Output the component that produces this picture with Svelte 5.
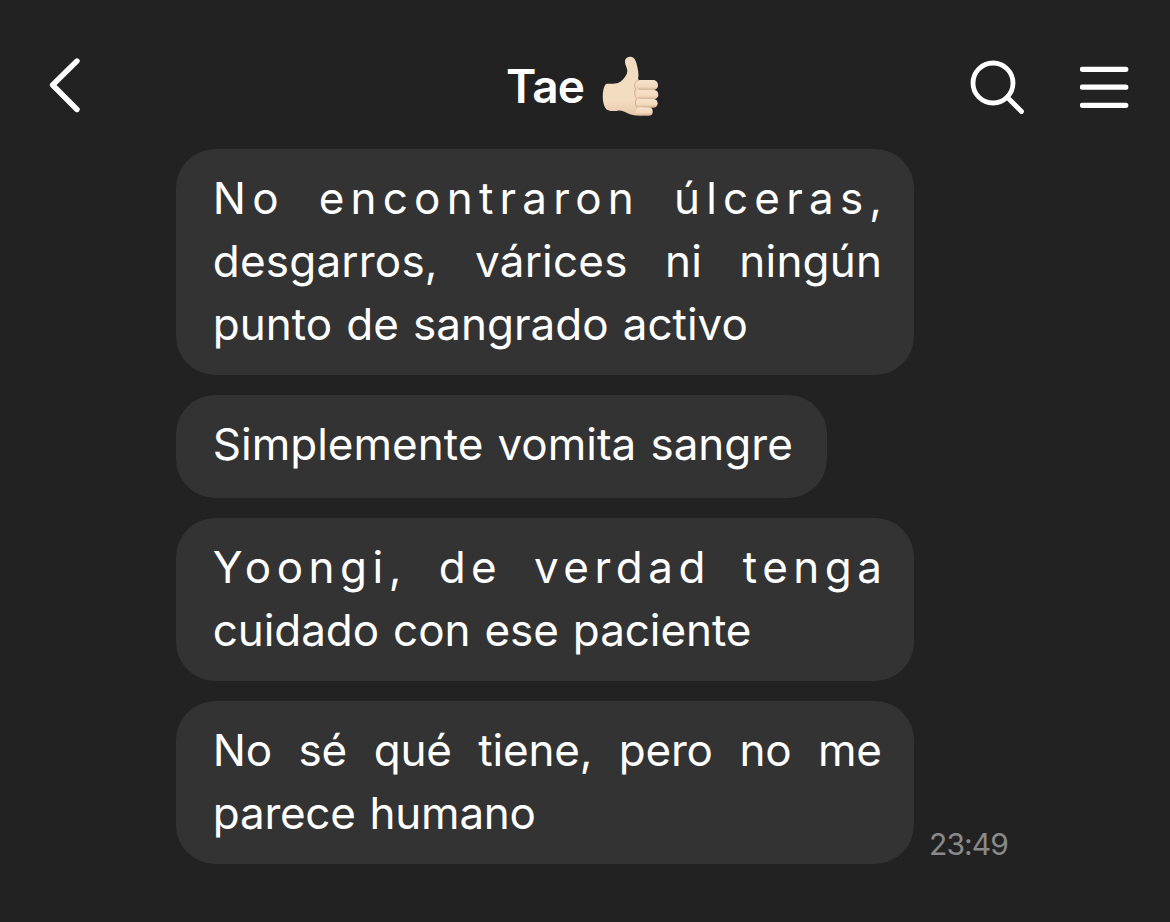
<script>
  const messages = [
    {
      lines: [
        { text: 'No encontraron úlceras,', fill: true, spacing: 6.2 },
        { text: 'desgarros, várices ni ningún', fill: true, spacing: 0.2 },
        { text: 'punto de sangrado activo', spacing: 0 }
      ]
    },
    { lines: [{ text: 'Simplemente vomita sangre', spacing: 0 }], single: true },
    {
      lines: [
        { text: 'Yoongi, de verdad tenga', fill: true, spacing: 5.5 },
        { text: 'cuidado con ese paciente', spacing: -0.08 }
      ]
    },
    {
      lines: [
        { text: 'No sé qué tiene, pero no me', fill: true, spacing: -0.2 },
        { text: 'parece humano', spacing: -0.25 }
      ],
      time: '23:49'
    }
  ];
</script>

<main class="chat">
  <header class="bar">
    <svg class="back" width="34" height="58" viewBox="0 0 34 58" aria-hidden="true">
      <path d="M30 5L5.6 29L30 53.5" />
    </svg>
    <h1 class="title">
      <span class="name">Tae</span>
      <svg class="thumb" width="80" height="75" viewBox="0 0 240 225" aria-hidden="true">
        <defs>
          <linearGradient id="skin" x1="0" y1="0" x2="0" y2="1">
            <stop offset="0" stop-color="#f3dbc0" />
            <stop offset="0.75" stop-color="#f4dcc1" />
            <stop offset="1" stop-color="#e6c8a9" />
          </linearGradient>
          <linearGradient id="finger" x1="0" y1="0" x2="0" y2="1">
            <stop offset="0" stop-color="#f7e2c9" />
            <stop offset="0.65" stop-color="#f2d9bd" />
            <stop offset="1" stop-color="#d3ae90" />
          </linearGradient>
        </defs>
        <path
          fill="url(#skin)"
          d="M106 42C102 27 110 20 122 20C132 21 137 29 140 42C143 57 148 72 144 88L158 98L160 195C145 198 127 196 116 191C104 186 96 181 84 182C70 184 55 184 49 178C35 164 35 117 47 103C53 99 68 103 82 100C95 95 113 76 112 62C111 54 108 49 106 42Z"
        />
        <rect fill="url(#finger)" x="137" y="90" width="67" height="31" rx="15" />
        <rect fill="url(#finger)" x="138" y="120" width="67" height="28" rx="14" />
        <rect fill="url(#finger)" x="138" y="147" width="65" height="26" rx="13" />
        <rect fill="url(#finger)" x="139" y="172" width="49" height="25" rx="12" />
        <path fill="none" stroke="#d3ae90" stroke-width="3" stroke-linecap="round" d="M146 90C134 94 131 106 137 117C132 126 134 138 139 146C135 154 136 164 140 172" />
      </svg>
    </h1>
    <svg class="search" width="58" height="58" viewBox="0 0 58 58" aria-hidden="true">
      <circle cx="25" cy="25" r="20" />
      <path d="M39.5 39.5L53.5 53.5" />
    </svg>
    <svg class="menu" width="50" height="44" viewBox="0 0 50 44" aria-hidden="true">
      <path d="M2.4 4.3H45.8M2.4 22.2H45.8M2.4 40.3H45.8" />
    </svg>
  </header>

  <section class="thread">
    {#each messages as message}
      <div class="row">
        <div class="bubble" class:single={message.single}>
          {#each message.lines as line}
            <span
              class="line"
              class:fill={line.fill}
              style="letter-spacing: {line.spacing}px; margin-right: {-line.spacing}px">{line.text}</span>
          {/each}
        </div>
        {#if message.time}<time>{message.time}</time>{/if}
      </div>
    {/each}
  </section>
</main>

<style>
  :global(body) {
    margin: 0;
    background: #222222;
  }
  .chat {
    box-sizing: border-box;
    width: 1170px;
    height: 922px;
    overflow: hidden;
    background: #222222;
    color: #ffffff;
    font-family: Inter, sans-serif;
  }
  .bar {
    box-sizing: border-box;
    height: 149px;
    padding: 50px 40px 0 47px;
    display: grid;
    grid-template-columns: 34px 1fr 58px 50px;
    align-items: start;
  }
  .bar > svg {
    fill: none;
    stroke: #ffffff;
    stroke-linecap: round;
    stroke-linejoin: round;
  }
  .back {
    margin-top: 6px;
    stroke-width: 5.4;
  }
  .search {
    margin-top: 8px;
    margin-left: -54px;
    stroke-width: 4.8;
  }
  .menu {
    margin-top: 15px;
    stroke-width: 5.2;
  }
  .title {
    margin: 0 0 0 425px;
    display: flex;
    align-items: flex-start;
    font-size: 46px;
    font-weight: 600;
    line-height: 72px;
  }
  .name {
    width: 84px;
    letter-spacing: -0.8px;
    white-space: nowrap;
  }
  .thread {
    padding: 0.4px 0 0 175.5px;
    display: flex;
    flex-direction: column;
    gap: 20.5px;
  }
  .row {
    display: flex;
    align-items: flex-end;
    gap: 15px;
  }
  .bubble {
    box-sizing: border-box;
    width: 738.5px;
    padding: 17.8px 32px 18.7px 37.3px;
    border-radius: 39px;
    background: #333333;
    font-size: 44px;
    line-height: 63px;
  }
  .single {
    width: 651.5px;
    padding-bottom: 21.7px;
  }
  .line {
    display: block;
    white-space: nowrap;
    word-spacing: 1.8px;
  }
  .fill {
    text-align-last: justify;
    word-spacing: 0;
  }
  time {
    color: #8a8a8a;
    font-size: 30px;
    letter-spacing: -0.9px;
    line-height: 40px;
  }
</style>
